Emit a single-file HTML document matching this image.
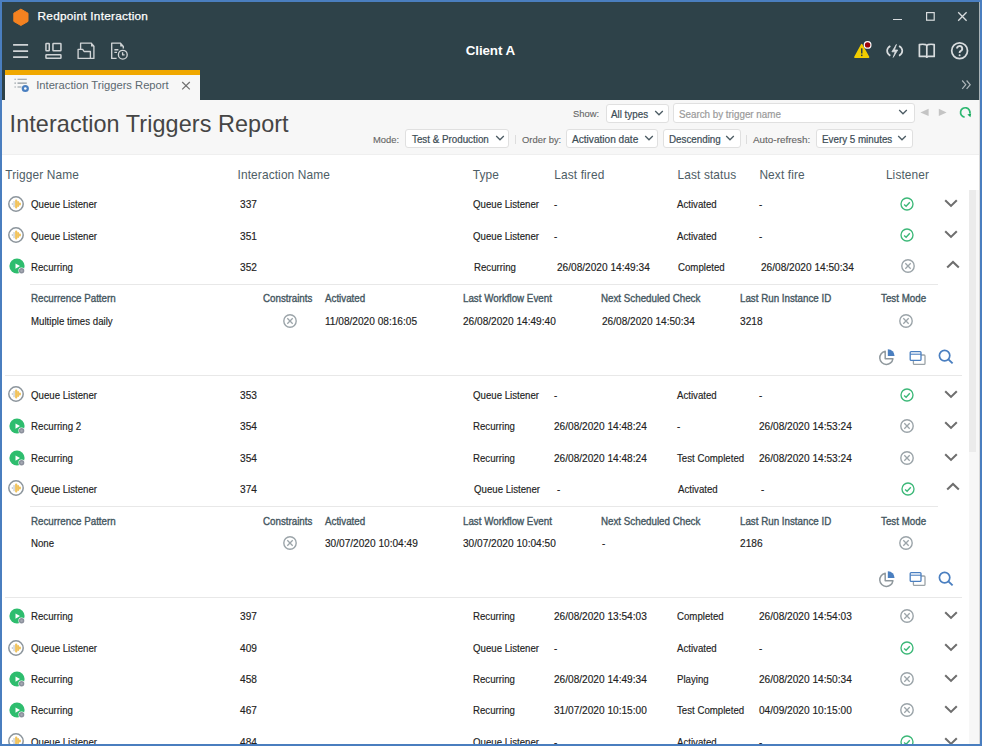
<!DOCTYPE html>
<html><head><meta charset="utf-8"><title>Interaction Triggers Report</title>
<style>
html,body{margin:0;padding:0;}
body{width:982px;height:746px;position:relative;overflow:hidden;background:#4a7ebf;font-family:'Liberation Sans', sans-serif;}
.a{position:absolute;}
.t{position:absolute;white-space:nowrap;font-family:'Liberation Sans', sans-serif;transform-origin:0 0;}
svg.a{overflow:visible;}
</style></head><body>
<div class="a" style="left:2.00px;top:2.00px;width:978.00px;height:742.00px;background:#fff"></div>
<div class="a" style="left:2.00px;top:2.00px;width:978.00px;height:98.00px;background:#2e4249"></div>
<svg class="a" style="left:0.00px;top:0.00px;" width="40" height="35" viewBox="0 0 40 35"><polygon points="20.90,9.10 28.00,13.20 28.00,21.40 20.90,25.50 13.80,21.40 13.80,13.20" fill="#f58220" stroke="#f58220" stroke-width="1" stroke-linejoin="round"/></svg>
<div class="t" style="left:37.60px;top:11px;font-size:11.8px;line-height:11.8px;color:#ffffff;letter-spacing:0.25px;-webkit-text-stroke:0.25px #ffffff;">Redpoint Interaction</div>
<div class="a" style="left:893.40px;top:19.20px;width:8.60px;height:1.30px;background:#d8dcde"></div>
<svg class="a" style="left:920.00px;top:5.00px;" width="20" height="20" viewBox="0 0 20 20"><rect x="6.6" y="7.6" width="7.6" height="7.6" fill="none" stroke="#d8dcde" stroke-width="1.2"/></svg>
<svg class="a" style="left:950.00px;top:5.00px;" width="25" height="20" viewBox="0 0 25 20"><path d="M8.2 7.3 L16.6 15.7 M16.6 7.3 L8.2 15.7" stroke="#d8dcde" stroke-width="1.3"/></svg>
<svg class="a" style="left:10.00px;top:40.00px;" width="22" height="22" viewBox="0 0 22 22"><path d="M3.1 4.9 H18.1 M3.1 11.1 H18.1 M3.1 17.1 H18.1" stroke="#d0d4d6" stroke-width="1.9"/></svg>
<svg class="a" style="left:40.00px;top:38.00px;" width="26" height="26" viewBox="0 0 26 26"><g fill="none" stroke="#d0d4d6" stroke-width="1.5"><rect x="5.95" y="5.45" width="3.3" height="7.4" rx="0.6"/><rect x="12.95" y="5.45" width="8" height="7.4" rx="0.6"/><rect x="5.95" y="16.85" width="15" height="3.5" rx="0.6"/></g></svg>
<svg class="a" style="left:74.00px;top:38.00px;" width="26" height="26" viewBox="0 0 26 26"><g fill="none" stroke="#d0d4d6" stroke-width="1.35" stroke-linejoin="round"><path d="M6.6 11.2 V5.1 H17.2 L19.9 8.2 V20.4 H16.4"/><path d="M4.1 20.4 V11.3 H8.7 L10.1 13.5 H16.4 V20.4 Z"/></g><path d="M17 4.6 L20.4 8.4 H17 Z" fill="#d0d4d6"/></svg>
<svg class="a" style="left:107.00px;top:38.00px;" width="26" height="26" viewBox="0 0 26 26"><g fill="none" stroke="#d0d4d6" stroke-width="1.35" stroke-linejoin="round"><path d="M9.6 20.4 H4.7 V5.1 H13.4 L16.3 8.4 V10.6"/><path d="M7.4 11.7 H11.4 M7.4 14.4 H10"/><circle cx="15.8" cy="16.7" r="4.4"/><path d="M15.6 14.3 V16.9 H17.6"/></g><path d="M13.2 4.6 L16.8 8.6 H13.2 Z" fill="#d0d4d6"/></svg>
<div class="t" style="left:465.70px;top:44px;font-size:13.4px;line-height:13.4px;color:#ffffff;font-weight:bold;letter-spacing:-0.1px;">Client A</div>
<svg class="a" style="left:850.00px;top:38.00px;" width="26" height="26" viewBox="0 0 26 26"><path d="M11.7 6.6 L18.6 19.2 H4.9 Z" fill="#f2cd00" stroke="#f2cd00" stroke-width="1.5" stroke-linejoin="round"/><rect x="11" y="10.3" width="1.5" height="5.2" fill="#2e4249"/><rect x="11" y="16.6" width="1.5" height="1.5" fill="#2e4249"/><circle cx="17.6" cy="6.9" r="3.9" fill="#ffffff"/><circle cx="17.6" cy="6.9" r="2.7" fill="#9c0008"/></svg>
<svg class="a" style="left:882.00px;top:38.00px;" width="26" height="26" viewBox="0 0 26 26"><g fill="none" stroke="#d8dcde" stroke-width="1.7"><path d="M8.34 7.89 A7.6 6.0 0 0 0 8.34 17.71"/><path d="M17.06 7.89 A7.6 6.0 0 0 1 17.06 17.71"/></g><path d="M14.4 6.4 L9.9 13.8 H13.2 L11.2 19.4 L15.7 12 H12.4 Z" fill="#d8dcde" stroke="#d8dcde" stroke-width="0.8" stroke-linejoin="round"/></svg>
<svg class="a" style="left:914.00px;top:38.00px;" width="26" height="26" viewBox="0 0 26 26"><g fill="none" stroke="#d8dcde" stroke-width="1.7" stroke-linejoin="round" stroke-linecap="round"><path d="M5.4 6.6 Q8.6 5.9 11.6 6.6 L12.8 7.4 L14 6.6 Q17 5.9 20.2 6.6 V18.4 H14 L12.8 19.2 L11.6 18.4 H5.4 Z"/><path d="M12.8 7.6 V18.6"/></g></svg>
<svg class="a" style="left:946.00px;top:37.00px;" width="28" height="28" viewBox="0 0 28 28"><circle cx="13.6" cy="13.8" r="7.9" fill="none" stroke="#d8dcde" stroke-width="1.75"/><path d="M11.0 11.6 A2.6 2.6 0 1 1 14.5 14.1 C13.7 14.5 13.6 15.1 13.6 16" fill="none" stroke="#d8dcde" stroke-width="1.9"/><circle cx="13.6" cy="18.2" r="1.0" fill="#d8dcde"/></svg>
<div class="a" style="left:4.70px;top:70.30px;width:195.30px;height:4.30px;background:#f0a800"></div>
<div class="a" style="left:4.70px;top:74.60px;width:195.30px;height:26.00px;background:#f7f7f7"></div>
<svg class="a" style="left:10.00px;top:74.00px;" width="24" height="22" viewBox="0 0 24 22"><g stroke="#8e989e" stroke-width="1.1"><path d="M4.5 5.2 H5.8 M7.5 5.2 H16.8 M4.5 9.1 H5.8 M7.5 9.1 H16.8 M4.5 13 H5.8 M7.5 13 H11.5"/></g><circle cx="15.3" cy="14.5" r="3.6" fill="#4a7fc0"/><circle cx="15.3" cy="14.5" r="1.3" fill="#ffffff"/></svg>
<div class="t" style="left:36.20px;top:80px;font-size:11.2px;line-height:11.2px;color:#5b6870;">Interaction Triggers Report</div>
<svg class="a" style="left:178.00px;top:78.00px;" width="16" height="16" viewBox="0 0 16 16"><path d="M4.2 4 L11.8 11.4 M11.8 4 L4.2 11.4" stroke="#707070" stroke-width="1.2"/></svg>
<svg class="a" style="left:958.00px;top:76.00px;" width="16" height="16" viewBox="0 0 16 16"><path d="M4.2 4.5 L7.8 8.7 L4.2 12.9 M8.6 4.5 L12.2 8.7 L8.6 12.9" fill="none" stroke="#aeb6ba" stroke-width="1.2"/></svg>
<div class="a" style="left:2.00px;top:100.00px;width:978.00px;height:54.00px;background:#f7f7f7"></div>
<div class="a" style="left:2.00px;top:153.50px;width:978.00px;height:1.00px;background:#efefef"></div>
<div class="t" style="left:9.60px;top:113px;font-size:23.4px;line-height:23.4px;color:#454545;letter-spacing:0.08px;">Interaction Triggers Report</div>
<div class="t" style="left:572.60px;top:109px;font-size:9.8px;line-height:9.8px;color:#666666;transform:scaleX(0.96);-webkit-text-stroke:0.12px #666;">Show:</div>
<div class="a" style="left:605.80px;top:103.50px;width:63.00px;height:19.30px;background:#fff;border:1px solid #e0e0e0;border-radius:3px;box-sizing:border-box"></div>
<div class="t" style="left:611.10px;top:110px;font-size:10.0px;line-height:10.0px;color:#3c4c55;transform:scaleX(0.98);-webkit-text-stroke:0.2px #3c4c55;">All types</div>
<svg class="a" style="left:653.40px;top:106.55px;" width="12" height="12" viewBox="0 0 12 12"><path d="M2.2 4 L6 7.8 L9.8 4" fill="none" stroke="#4d5c64" stroke-width="1.3"/></svg>
<div class="a" style="left:673.40px;top:102.60px;width:241.20px;height:20.60px;background:#fff;border:1px solid #e0e0e0;border-radius:3px;box-sizing:border-box"></div>
<div class="t" style="left:679.30px;top:110px;font-size:10.0px;line-height:10.0px;color:#9a9a9a;transform:scaleX(0.98);-webkit-text-stroke:0.2px #9a9a9a;">Search by trigger name</div>
<svg class="a" style="left:897.00px;top:106.30px;" width="12" height="12" viewBox="0 0 12 12"><path d="M2.2 4 L6 7.8 L9.8 4" fill="none" stroke="#4d5c64" stroke-width="1.3"/></svg>
<svg class="a" style="left:916.00px;top:104.00px;" width="16" height="16" viewBox="0 0 16 16"><path d="M12.6 4.8 V12.1 L4.4 8.45 Z" fill="#c4c4c4"/></svg>
<svg class="a" style="left:934.00px;top:104.00px;" width="16" height="16" viewBox="0 0 16 16"><path d="M4.8 4.8 V12.1 L12.6 8.45 Z" fill="#c4c4c4"/></svg>
<svg class="a" style="left:955.00px;top:103.00px;" width="20" height="20" viewBox="0 0 20 20"><path d="M9.6 14.1 A4.7 4.7 0 1 1 14.8 10.6" fill="none" stroke="#2eb872" stroke-width="1.7"/><path d="M12.4 11.6 L16.2 10.6 L15.4 14.2 Z" fill="#14a85a"/></svg>
<div class="t" style="left:372.90px;top:135px;font-size:9.8px;line-height:9.8px;color:#666666;transform:scaleX(0.96);-webkit-text-stroke:0.12px #666;">Mode:</div>
<div class="a" style="left:405.40px;top:129.00px;width:104.10px;height:18.80px;background:#fff;border:1px solid #e0e0e0;border-radius:3px;box-sizing:border-box"></div>
<div class="t" style="left:411.70px;top:135px;font-size:10.0px;line-height:10.0px;color:#3c4c55;transform:scaleX(0.98);-webkit-text-stroke:0.2px #3c4c55;">Test &amp; Production</div>
<svg class="a" style="left:493.90px;top:131.80px;" width="12" height="12" viewBox="0 0 12 12"><path d="M2.2 4 L6 7.8 L9.8 4" fill="none" stroke="#4d5c64" stroke-width="1.3"/></svg>
<div class="a" style="left:515.20px;top:134.50px;width:1.00px;height:9.00px;background:#dddddd"></div>
<div class="t" style="left:522.00px;top:135px;font-size:9.8px;line-height:9.8px;color:#666666;transform:scaleX(0.96);-webkit-text-stroke:0.12px #666;">Order by:</div>
<div class="a" style="left:566.20px;top:129.00px;width:92.20px;height:18.80px;background:#fff;border:1px solid #e0e0e0;border-radius:3px;box-sizing:border-box"></div>
<div class="t" style="left:572.10px;top:135px;font-size:10.0px;line-height:10.0px;color:#3c4c55;transform:scaleX(1.01);-webkit-text-stroke:0.2px #3c4c55;">Activation date</div>
<svg class="a" style="left:643.10px;top:131.80px;" width="12" height="12" viewBox="0 0 12 12"><path d="M2.2 4 L6 7.8 L9.8 4" fill="none" stroke="#4d5c64" stroke-width="1.3"/></svg>
<div class="a" style="left:662.80px;top:129.00px;width:77.80px;height:18.80px;background:#fff;border:1px solid #e0e0e0;border-radius:3px;box-sizing:border-box"></div>
<div class="t" style="left:668.70px;top:135px;font-size:10.0px;line-height:10.0px;color:#3c4c55;transform:scaleX(0.98);-webkit-text-stroke:0.2px #3c4c55;">Descending</div>
<svg class="a" style="left:724.40px;top:131.80px;" width="12" height="12" viewBox="0 0 12 12"><path d="M2.2 4 L6 7.8 L9.8 4" fill="none" stroke="#4d5c64" stroke-width="1.3"/></svg>
<div class="a" style="left:746.20px;top:134.50px;width:1.00px;height:9.00px;background:#dddddd"></div>
<div class="t" style="left:753.00px;top:135px;font-size:9.8px;line-height:9.8px;color:#666666;transform:scaleX(1.01);-webkit-text-stroke:0.12px #666;">Auto-refresh:</div>
<div class="a" style="left:815.50px;top:129.00px;width:97.20px;height:18.80px;background:#fff;border:1px solid #e0e0e0;border-radius:3px;box-sizing:border-box"></div>
<div class="t" style="left:821.90px;top:135px;font-size:10.0px;line-height:10.0px;color:#3c4c55;transform:scaleX(0.98);-webkit-text-stroke:0.2px #3c4c55;">Every 5 minutes</div>
<svg class="a" style="left:896.00px;top:131.80px;" width="12" height="12" viewBox="0 0 12 12"><path d="M2.2 4 L6 7.8 L9.8 4" fill="none" stroke="#4d5c64" stroke-width="1.3"/></svg>
<div class="t" style="left:5.30px;top:170px;font-size:11.9px;line-height:11.9px;color:#4e5d65;letter-spacing:0.12px;">Trigger Name</div>
<div class="t" style="left:237.50px;top:170px;font-size:11.9px;line-height:11.9px;color:#4e5d65;letter-spacing:0.12px;">Interaction Name</div>
<div class="t" style="left:472.80px;top:170px;font-size:11.9px;line-height:11.9px;color:#4e5d65;letter-spacing:0.12px;">Type</div>
<div class="t" style="left:554.30px;top:170px;font-size:11.9px;line-height:11.9px;color:#4e5d65;letter-spacing:0.12px;">Last fired</div>
<div class="t" style="left:677.50px;top:170px;font-size:11.9px;line-height:11.9px;color:#4e5d65;letter-spacing:0.12px;">Last status</div>
<div class="t" style="left:759.40px;top:170px;font-size:11.9px;line-height:11.9px;color:#4e5d65;letter-spacing:0.12px;">Next fire</div>
<div class="t" style="left:885.90px;top:170px;font-size:11.9px;line-height:11.9px;color:#4e5d65;letter-spacing:0.12px;">Listener</div>
<div class="a" style="left:968.50px;top:190.00px;width:10.50px;height:554.00px;background:#f7f7f7"></div>
<div class="a" style="left:969.20px;top:190.00px;width:7.00px;height:262.00px;background:#ebebeb"></div>
<svg class="a" style="left:5.90px;top:193.50px;" width="20" height="20" viewBox="0 0 20 20"><circle cx="10" cy="10" r="7.2" fill="#fff" stroke="#8c959c" stroke-width="1.5"/><g fill="#b9c1c9"><rect x="5.8" y="8.9" width="1.0" height="2.2" rx="0.5"/><rect x="7.5" y="6.9" width="1.1" height="6.3" rx="0.55"/></g><g fill="#f1c35c"><rect x="9.1" y="5.5" width="2.2" height="9.1" rx="1"/><rect x="11.1" y="6.9" width="1.9" height="6.2" rx="0.8"/><rect x="12.8" y="8.4" width="2.1" height="3.2" rx="1"/></g></svg>
<div class="t" style="left:30.60px;top:200px;font-size:10.4px;line-height:10.4px;color:#222222;transform:scaleX(0.93);-webkit-text-stroke:0.15px #222;">Queue Listener</div>
<div class="t" style="left:239.90px;top:200px;font-size:10.4px;line-height:10.4px;color:#222222;transform:scaleX(0.975);-webkit-text-stroke:0.15px #222;">337</div>
<div class="t" style="left:472.80px;top:200px;font-size:10.4px;line-height:10.4px;color:#222222;transform:scaleX(0.93);-webkit-text-stroke:0.15px #222;">Queue Listener</div>
<div class="t" style="left:553.70px;top:200px;font-size:10.4px;line-height:10.4px;color:#222222;transform:scaleX(0.93);-webkit-text-stroke:0.15px #222;">-</div>
<div class="t" style="left:676.90px;top:200px;font-size:10.4px;line-height:10.4px;color:#222222;transform:scaleX(0.93);-webkit-text-stroke:0.15px #222;">Activated</div>
<div class="t" style="left:759.00px;top:200px;font-size:10.4px;line-height:10.4px;color:#222222;transform:scaleX(0.93);-webkit-text-stroke:0.15px #222;">-</div>
<svg class="a" style="left:897.50px;top:194.90px;" width="18" height="18" viewBox="0 0 18 18"><circle cx="9" cy="9" r="6.0" fill="none" stroke="#3cb878" stroke-width="1.35"/><path d="M6.1 9.4 L8.1 11.2 L11.8 7.2" fill="none" stroke="#3cb878" stroke-width="1.4"/></svg>
<svg class="a" style="left:943.10px;top:194.90px;" width="16" height="16" viewBox="0 0 16 16"><path d="M2.2 5.2 L8 10.9 L13.8 5.2" fill="none" stroke="#6e6e6e" stroke-width="2.05"/></svg>
<svg class="a" style="left:5.90px;top:224.90px;" width="20" height="20" viewBox="0 0 20 20"><circle cx="10" cy="10" r="7.2" fill="#fff" stroke="#8c959c" stroke-width="1.5"/><g fill="#b9c1c9"><rect x="5.8" y="8.9" width="1.0" height="2.2" rx="0.5"/><rect x="7.5" y="6.9" width="1.1" height="6.3" rx="0.55"/></g><g fill="#f1c35c"><rect x="9.1" y="5.5" width="2.2" height="9.1" rx="1"/><rect x="11.1" y="6.9" width="1.9" height="6.2" rx="0.8"/><rect x="12.8" y="8.4" width="2.1" height="3.2" rx="1"/></g></svg>
<div class="t" style="left:30.60px;top:232px;font-size:10.4px;line-height:10.4px;color:#222222;transform:scaleX(0.93);-webkit-text-stroke:0.15px #222;">Queue Listener</div>
<div class="t" style="left:239.90px;top:232px;font-size:10.4px;line-height:10.4px;color:#222222;transform:scaleX(0.975);-webkit-text-stroke:0.15px #222;">351</div>
<div class="t" style="left:472.80px;top:232px;font-size:10.4px;line-height:10.4px;color:#222222;transform:scaleX(0.93);-webkit-text-stroke:0.15px #222;">Queue Listener</div>
<div class="t" style="left:553.70px;top:232px;font-size:10.4px;line-height:10.4px;color:#222222;transform:scaleX(0.93);-webkit-text-stroke:0.15px #222;">-</div>
<div class="t" style="left:676.90px;top:232px;font-size:10.4px;line-height:10.4px;color:#222222;transform:scaleX(0.93);-webkit-text-stroke:0.15px #222;">Activated</div>
<div class="t" style="left:759.00px;top:232px;font-size:10.4px;line-height:10.4px;color:#222222;transform:scaleX(0.93);-webkit-text-stroke:0.15px #222;">-</div>
<svg class="a" style="left:897.50px;top:226.30px;" width="18" height="18" viewBox="0 0 18 18"><circle cx="9" cy="9" r="6.0" fill="none" stroke="#3cb878" stroke-width="1.35"/><path d="M6.1 9.4 L8.1 11.2 L11.8 7.2" fill="none" stroke="#3cb878" stroke-width="1.4"/></svg>
<svg class="a" style="left:943.10px;top:226.30px;" width="16" height="16" viewBox="0 0 16 16"><path d="M2.2 5.2 L8 10.9 L13.8 5.2" fill="none" stroke="#6e6e6e" stroke-width="2.05"/></svg>
<svg class="a" style="left:6.50px;top:256.30px;" width="20" height="20" viewBox="0 0 20 20"><circle cx="10" cy="10" r="7.6" fill="#2ebd6e"/><path d="M8.5 7.5 V12.7 L13.0 10.1 Z" fill="#fff"/><circle cx="14.6" cy="14.8" r="3.2" fill="#fff"/><circle cx="14.6" cy="14.8" r="2.7" fill="#8b909c"/><circle cx="14.6" cy="14.8" r="1.2" fill="#a6aab4"/></svg>
<div class="t" style="left:30.60px;top:263px;font-size:10.4px;line-height:10.4px;color:#222222;transform:scaleX(0.93);-webkit-text-stroke:0.15px #222;">Recurring</div>
<div class="t" style="left:239.90px;top:263px;font-size:10.4px;line-height:10.4px;color:#222222;transform:scaleX(0.975);-webkit-text-stroke:0.15px #222;">352</div>
<div class="t" style="left:474.30px;top:263px;font-size:10.4px;line-height:10.4px;color:#222222;transform:scaleX(0.93);-webkit-text-stroke:0.15px #222;">Recurring</div>
<div class="t" style="left:556.70px;top:263px;font-size:10.4px;line-height:10.4px;color:#222222;transform:scaleX(0.973);-webkit-text-stroke:0.15px #222;">26/08/2020 14:49:34</div>
<div class="t" style="left:678.40px;top:263px;font-size:10.4px;line-height:10.4px;color:#222222;transform:scaleX(0.93);-webkit-text-stroke:0.15px #222;">Completed</div>
<div class="t" style="left:760.50px;top:263px;font-size:10.4px;line-height:10.4px;color:#222222;transform:scaleX(0.973);-webkit-text-stroke:0.15px #222;">26/08/2020 14:50:34</div>
<svg class="a" style="left:899.00px;top:257.40px;" width="18" height="18" viewBox="0 0 18 18"><circle cx="9" cy="9" r="6.2" fill="none" stroke="#9ba4a9" stroke-width="1.4"/><path d="M6.3 6.3 L11.7 11.7 M11.7 6.3 L6.3 11.7" stroke="#9ba4a9" stroke-width="1.3"/></svg>
<svg class="a" style="left:944.60px;top:257.00px;" width="16" height="16" viewBox="0 0 16 16"><path d="M2.2 10.6 L8 4.9 L13.8 10.6" fill="none" stroke="#6e6e6e" stroke-width="2.05"/></svg>
<div class="a" style="left:30.00px;top:284.30px;width:908.00px;height:1.00px;background:#e8e8e8"></div>
<div class="t" style="left:30.60px;top:294px;font-size:10.4px;line-height:10.4px;color:#45575f;transform:scaleX(0.94);-webkit-text-stroke:0.35px #45575f;">Recurrence Pattern</div>
<div class="t" style="left:263.40px;top:294px;font-size:10.4px;line-height:10.4px;color:#45575f;transform:scaleX(0.94);-webkit-text-stroke:0.35px #45575f;">Constraints</div>
<div class="t" style="left:324.60px;top:294px;font-size:10.4px;line-height:10.4px;color:#45575f;transform:scaleX(0.94);-webkit-text-stroke:0.35px #45575f;">Activated</div>
<div class="t" style="left:462.80px;top:294px;font-size:10.4px;line-height:10.4px;color:#45575f;transform:scaleX(0.94);-webkit-text-stroke:0.35px #45575f;">Last Workflow Event</div>
<div class="t" style="left:601.40px;top:294px;font-size:10.4px;line-height:10.4px;color:#45575f;transform:scaleX(0.94);-webkit-text-stroke:0.35px #45575f;">Next Scheduled Check</div>
<div class="t" style="left:739.90px;top:294px;font-size:10.4px;line-height:10.4px;color:#45575f;transform:scaleX(0.94);-webkit-text-stroke:0.35px #45575f;">Last Run Instance ID</div>
<div class="t" style="left:881.00px;top:294px;font-size:10.4px;line-height:10.4px;color:#45575f;transform:scaleX(0.94);-webkit-text-stroke:0.35px #45575f;">Test Mode</div>
<div class="t" style="left:30.60px;top:317px;font-size:10.4px;line-height:10.4px;color:#222222;transform:scaleX(0.93);-webkit-text-stroke:0.15px #222;">Multiple times daily</div>
<svg class="a" style="left:281.20px;top:312.20px;" width="18" height="18" viewBox="0 0 18 18"><circle cx="9" cy="9" r="6.2" fill="none" stroke="#9ba4a9" stroke-width="1.4"/><path d="M6.3 6.3 L11.7 11.7 M11.7 6.3 L6.3 11.7" stroke="#9ba4a9" stroke-width="1.3"/></svg>
<div class="t" style="left:325.40px;top:317px;font-size:10.4px;line-height:10.4px;color:#222222;transform:scaleX(0.973);-webkit-text-stroke:0.15px #222;">11/08/2020 08:16:05</div>
<div class="t" style="left:463.40px;top:317px;font-size:10.4px;line-height:10.4px;color:#222222;transform:scaleX(0.973);-webkit-text-stroke:0.15px #222;">26/08/2020 14:49:40</div>
<div class="t" style="left:602.20px;top:317px;font-size:10.4px;line-height:10.4px;color:#222222;transform:scaleX(0.973);-webkit-text-stroke:0.15px #222;">26/08/2020 14:50:34</div>
<div class="t" style="left:740.30px;top:317px;font-size:10.4px;line-height:10.4px;color:#222222;transform:scaleX(0.975);-webkit-text-stroke:0.15px #222;">3218</div>
<svg class="a" style="left:896.60px;top:312.20px;" width="18" height="18" viewBox="0 0 18 18"><circle cx="9" cy="9" r="6.2" fill="none" stroke="#9ba4a9" stroke-width="1.4"/><path d="M6.3 6.3 L11.7 11.7 M11.7 6.3 L6.3 11.7" stroke="#9ba4a9" stroke-width="1.3"/></svg>
<svg class="a" style="left:876.00px;top:347.30px;" width="22" height="22" viewBox="0 0 22 22"><path d="M9.2 4.3 A6.6 6.6 0 1 0 16.9 11.8 H9.2 Z" fill="none" stroke="#8f989d" stroke-width="1.5" stroke-linejoin="round"/><path d="M11.8 2.2 A6.6 6.6 0 0 1 18.6 9 H11.8 Z" fill="#4a7fc0"/></svg>
<svg class="a" style="left:906.00px;top:346.80px;" width="22" height="22" viewBox="0 0 22 22"><rect x="7.4" y="8" width="11.6" height="9.4" rx="1" fill="#fff" stroke="#9aa2a7" stroke-width="1.3"/><rect x="4.2" y="4.6" width="10.8" height="8.8" rx="1" fill="#fff" stroke="#4a7fc0" stroke-width="1.3"/><path d="M4.2 7.2 H15" stroke="#4a7fc0" stroke-width="1.1"/></svg>
<svg class="a" style="left:934.00px;top:346.30px;" width="22" height="22" viewBox="0 0 22 22"><circle cx="10.6" cy="9.6" r="5.2" fill="none" stroke="#4a7fc0" stroke-width="1.7"/><path d="M14.4 13.4 L18.6 17.4" stroke="#4a7fc0" stroke-width="1.9"/></svg>
<div class="a" style="left:5.00px;top:375.40px;width:957.00px;height:1.00px;background:#e8e8e8"></div>
<svg class="a" style="left:5.90px;top:384.15px;" width="20" height="20" viewBox="0 0 20 20"><circle cx="10" cy="10" r="7.2" fill="#fff" stroke="#8c959c" stroke-width="1.5"/><g fill="#b9c1c9"><rect x="5.8" y="8.9" width="1.0" height="2.2" rx="0.5"/><rect x="7.5" y="6.9" width="1.1" height="6.3" rx="0.55"/></g><g fill="#f1c35c"><rect x="9.1" y="5.5" width="2.2" height="9.1" rx="1"/><rect x="11.1" y="6.9" width="1.9" height="6.2" rx="0.8"/><rect x="12.8" y="8.4" width="2.1" height="3.2" rx="1"/></g></svg>
<div class="t" style="left:30.60px;top:391px;font-size:10.4px;line-height:10.4px;color:#222222;transform:scaleX(0.93);-webkit-text-stroke:0.15px #222;">Queue Listener</div>
<div class="t" style="left:239.90px;top:391px;font-size:10.4px;line-height:10.4px;color:#222222;transform:scaleX(0.975);-webkit-text-stroke:0.15px #222;">353</div>
<div class="t" style="left:472.80px;top:391px;font-size:10.4px;line-height:10.4px;color:#222222;transform:scaleX(0.93);-webkit-text-stroke:0.15px #222;">Queue Listener</div>
<div class="t" style="left:553.70px;top:391px;font-size:10.4px;line-height:10.4px;color:#222222;transform:scaleX(0.93);-webkit-text-stroke:0.15px #222;">-</div>
<div class="t" style="left:676.90px;top:391px;font-size:10.4px;line-height:10.4px;color:#222222;transform:scaleX(0.93);-webkit-text-stroke:0.15px #222;">Activated</div>
<div class="t" style="left:759.00px;top:391px;font-size:10.4px;line-height:10.4px;color:#222222;transform:scaleX(0.93);-webkit-text-stroke:0.15px #222;">-</div>
<svg class="a" style="left:897.50px;top:385.55px;" width="18" height="18" viewBox="0 0 18 18"><circle cx="9" cy="9" r="6.0" fill="none" stroke="#3cb878" stroke-width="1.35"/><path d="M6.1 9.4 L8.1 11.2 L11.8 7.2" fill="none" stroke="#3cb878" stroke-width="1.4"/></svg>
<svg class="a" style="left:943.10px;top:385.55px;" width="16" height="16" viewBox="0 0 16 16"><path d="M2.2 5.2 L8 10.9 L13.8 5.2" fill="none" stroke="#6e6e6e" stroke-width="2.05"/></svg>
<svg class="a" style="left:6.50px;top:416.00px;" width="20" height="20" viewBox="0 0 20 20"><circle cx="10" cy="10" r="7.6" fill="#2ebd6e"/><path d="M8.5 7.5 V12.7 L13.0 10.1 Z" fill="#fff"/><circle cx="14.6" cy="14.8" r="3.2" fill="#fff"/><circle cx="14.6" cy="14.8" r="2.7" fill="#8b909c"/><circle cx="14.6" cy="14.8" r="1.2" fill="#a6aab4"/></svg>
<div class="t" style="left:30.60px;top:422px;font-size:10.4px;line-height:10.4px;color:#222222;transform:scaleX(0.934);-webkit-text-stroke:0.15px #222;">Recurring 2</div>
<div class="t" style="left:239.90px;top:422px;font-size:10.4px;line-height:10.4px;color:#222222;transform:scaleX(0.975);-webkit-text-stroke:0.15px #222;">354</div>
<div class="t" style="left:472.80px;top:422px;font-size:10.4px;line-height:10.4px;color:#222222;transform:scaleX(0.93);-webkit-text-stroke:0.15px #222;">Recurring</div>
<div class="t" style="left:553.70px;top:422px;font-size:10.4px;line-height:10.4px;color:#222222;transform:scaleX(0.973);-webkit-text-stroke:0.15px #222;">26/08/2020 14:48:24</div>
<div class="t" style="left:676.90px;top:422px;font-size:10.4px;line-height:10.4px;color:#222222;transform:scaleX(0.93);-webkit-text-stroke:0.15px #222;">-</div>
<div class="t" style="left:759.00px;top:422px;font-size:10.4px;line-height:10.4px;color:#222222;transform:scaleX(0.973);-webkit-text-stroke:0.15px #222;">26/08/2020 14:53:24</div>
<svg class="a" style="left:897.50px;top:417.10px;" width="18" height="18" viewBox="0 0 18 18"><circle cx="9" cy="9" r="6.2" fill="none" stroke="#9ba4a9" stroke-width="1.4"/><path d="M6.3 6.3 L11.7 11.7 M11.7 6.3 L6.3 11.7" stroke="#9ba4a9" stroke-width="1.3"/></svg>
<svg class="a" style="left:943.10px;top:417.10px;" width="16" height="16" viewBox="0 0 16 16"><path d="M2.2 5.2 L8 10.9 L13.8 5.2" fill="none" stroke="#6e6e6e" stroke-width="2.05"/></svg>
<svg class="a" style="left:6.50px;top:447.60px;" width="20" height="20" viewBox="0 0 20 20"><circle cx="10" cy="10" r="7.6" fill="#2ebd6e"/><path d="M8.5 7.5 V12.7 L13.0 10.1 Z" fill="#fff"/><circle cx="14.6" cy="14.8" r="3.2" fill="#fff"/><circle cx="14.6" cy="14.8" r="2.7" fill="#8b909c"/><circle cx="14.6" cy="14.8" r="1.2" fill="#a6aab4"/></svg>
<div class="t" style="left:30.60px;top:454px;font-size:10.4px;line-height:10.4px;color:#222222;transform:scaleX(0.93);-webkit-text-stroke:0.15px #222;">Recurring</div>
<div class="t" style="left:239.90px;top:454px;font-size:10.4px;line-height:10.4px;color:#222222;transform:scaleX(0.975);-webkit-text-stroke:0.15px #222;">354</div>
<div class="t" style="left:472.80px;top:454px;font-size:10.4px;line-height:10.4px;color:#222222;transform:scaleX(0.93);-webkit-text-stroke:0.15px #222;">Recurring</div>
<div class="t" style="left:553.70px;top:454px;font-size:10.4px;line-height:10.4px;color:#222222;transform:scaleX(0.973);-webkit-text-stroke:0.15px #222;">26/08/2020 14:48:24</div>
<div class="t" style="left:676.90px;top:454px;font-size:10.4px;line-height:10.4px;color:#222222;transform:scaleX(0.93);-webkit-text-stroke:0.15px #222;">Test Completed</div>
<div class="t" style="left:759.00px;top:454px;font-size:10.4px;line-height:10.4px;color:#222222;transform:scaleX(0.973);-webkit-text-stroke:0.15px #222;">26/08/2020 14:53:24</div>
<svg class="a" style="left:897.50px;top:448.70px;" width="18" height="18" viewBox="0 0 18 18"><circle cx="9" cy="9" r="6.2" fill="none" stroke="#9ba4a9" stroke-width="1.4"/><path d="M6.3 6.3 L11.7 11.7 M11.7 6.3 L6.3 11.7" stroke="#9ba4a9" stroke-width="1.3"/></svg>
<svg class="a" style="left:943.10px;top:448.70px;" width="16" height="16" viewBox="0 0 16 16"><path d="M2.2 5.2 L8 10.9 L13.8 5.2" fill="none" stroke="#6e6e6e" stroke-width="2.05"/></svg>
<svg class="a" style="left:5.90px;top:478.40px;" width="20" height="20" viewBox="0 0 20 20"><circle cx="10" cy="10" r="7.2" fill="#fff" stroke="#8c959c" stroke-width="1.5"/><g fill="#b9c1c9"><rect x="5.8" y="8.9" width="1.0" height="2.2" rx="0.5"/><rect x="7.5" y="6.9" width="1.1" height="6.3" rx="0.55"/></g><g fill="#f1c35c"><rect x="9.1" y="5.5" width="2.2" height="9.1" rx="1"/><rect x="11.1" y="6.9" width="1.9" height="6.2" rx="0.8"/><rect x="12.8" y="8.4" width="2.1" height="3.2" rx="1"/></g></svg>
<div class="t" style="left:30.60px;top:485px;font-size:10.4px;line-height:10.4px;color:#222222;transform:scaleX(0.93);-webkit-text-stroke:0.15px #222;">Queue Listener</div>
<div class="t" style="left:239.90px;top:485px;font-size:10.4px;line-height:10.4px;color:#222222;transform:scaleX(0.975);-webkit-text-stroke:0.15px #222;">374</div>
<div class="t" style="left:474.30px;top:485px;font-size:10.4px;line-height:10.4px;color:#222222;transform:scaleX(0.93);-webkit-text-stroke:0.15px #222;">Queue Listener</div>
<div class="t" style="left:556.70px;top:485px;font-size:10.4px;line-height:10.4px;color:#222222;transform:scaleX(0.93);-webkit-text-stroke:0.15px #222;">-</div>
<div class="t" style="left:678.40px;top:485px;font-size:10.4px;line-height:10.4px;color:#222222;transform:scaleX(0.93);-webkit-text-stroke:0.15px #222;">Activated</div>
<div class="t" style="left:760.50px;top:485px;font-size:10.4px;line-height:10.4px;color:#222222;transform:scaleX(0.93);-webkit-text-stroke:0.15px #222;">-</div>
<svg class="a" style="left:899.00px;top:479.80px;" width="18" height="18" viewBox="0 0 18 18"><circle cx="9" cy="9" r="6.0" fill="none" stroke="#3cb878" stroke-width="1.35"/><path d="M6.1 9.4 L8.1 11.2 L11.8 7.2" fill="none" stroke="#3cb878" stroke-width="1.4"/></svg>
<svg class="a" style="left:944.60px;top:479.40px;" width="16" height="16" viewBox="0 0 16 16"><path d="M2.2 10.6 L8 4.9 L13.8 10.6" fill="none" stroke="#6e6e6e" stroke-width="2.05"/></svg>
<div class="a" style="left:30.00px;top:505.90px;width:908.00px;height:1.00px;background:#e8e8e8"></div>
<div class="t" style="left:30.60px;top:517px;font-size:10.4px;line-height:10.4px;color:#45575f;transform:scaleX(0.94);-webkit-text-stroke:0.35px #45575f;">Recurrence Pattern</div>
<div class="t" style="left:263.40px;top:517px;font-size:10.4px;line-height:10.4px;color:#45575f;transform:scaleX(0.94);-webkit-text-stroke:0.35px #45575f;">Constraints</div>
<div class="t" style="left:324.60px;top:517px;font-size:10.4px;line-height:10.4px;color:#45575f;transform:scaleX(0.94);-webkit-text-stroke:0.35px #45575f;">Activated</div>
<div class="t" style="left:462.80px;top:517px;font-size:10.4px;line-height:10.4px;color:#45575f;transform:scaleX(0.94);-webkit-text-stroke:0.35px #45575f;">Last Workflow Event</div>
<div class="t" style="left:601.40px;top:517px;font-size:10.4px;line-height:10.4px;color:#45575f;transform:scaleX(0.94);-webkit-text-stroke:0.35px #45575f;">Next Scheduled Check</div>
<div class="t" style="left:739.90px;top:517px;font-size:10.4px;line-height:10.4px;color:#45575f;transform:scaleX(0.94);-webkit-text-stroke:0.35px #45575f;">Last Run Instance ID</div>
<div class="t" style="left:881.00px;top:517px;font-size:10.4px;line-height:10.4px;color:#45575f;transform:scaleX(0.94);-webkit-text-stroke:0.35px #45575f;">Test Mode</div>
<div class="t" style="left:30.60px;top:539px;font-size:10.4px;line-height:10.4px;color:#222222;transform:scaleX(0.93);-webkit-text-stroke:0.15px #222;">None</div>
<svg class="a" style="left:281.20px;top:534.05px;" width="18" height="18" viewBox="0 0 18 18"><circle cx="9" cy="9" r="6.2" fill="none" stroke="#9ba4a9" stroke-width="1.4"/><path d="M6.3 6.3 L11.7 11.7 M11.7 6.3 L6.3 11.7" stroke="#9ba4a9" stroke-width="1.3"/></svg>
<div class="t" style="left:325.40px;top:539px;font-size:10.4px;line-height:10.4px;color:#222222;transform:scaleX(0.973);-webkit-text-stroke:0.15px #222;">30/07/2020 10:04:49</div>
<div class="t" style="left:463.40px;top:539px;font-size:10.4px;line-height:10.4px;color:#222222;transform:scaleX(0.973);-webkit-text-stroke:0.15px #222;">30/07/2020 10:04:50</div>
<div class="t" style="left:602.20px;top:539px;font-size:10.4px;line-height:10.4px;color:#222222;transform:scaleX(0.93);-webkit-text-stroke:0.15px #222;">-</div>
<div class="t" style="left:740.30px;top:539px;font-size:10.4px;line-height:10.4px;color:#222222;transform:scaleX(0.975);-webkit-text-stroke:0.15px #222;">2186</div>
<svg class="a" style="left:896.60px;top:534.05px;" width="18" height="18" viewBox="0 0 18 18"><circle cx="9" cy="9" r="6.2" fill="none" stroke="#9ba4a9" stroke-width="1.4"/><path d="M6.3 6.3 L11.7 11.7 M11.7 6.3 L6.3 11.7" stroke="#9ba4a9" stroke-width="1.3"/></svg>
<svg class="a" style="left:876.00px;top:568.90px;" width="22" height="22" viewBox="0 0 22 22"><path d="M9.2 4.3 A6.6 6.6 0 1 0 16.9 11.8 H9.2 Z" fill="none" stroke="#8f989d" stroke-width="1.5" stroke-linejoin="round"/><path d="M11.8 2.2 A6.6 6.6 0 0 1 18.6 9 H11.8 Z" fill="#4a7fc0"/></svg>
<svg class="a" style="left:906.00px;top:568.40px;" width="22" height="22" viewBox="0 0 22 22"><rect x="7.4" y="8" width="11.6" height="9.4" rx="1" fill="#fff" stroke="#9aa2a7" stroke-width="1.3"/><rect x="4.2" y="4.6" width="10.8" height="8.8" rx="1" fill="#fff" stroke="#4a7fc0" stroke-width="1.3"/><path d="M4.2 7.2 H15" stroke="#4a7fc0" stroke-width="1.1"/></svg>
<svg class="a" style="left:934.00px;top:567.90px;" width="22" height="22" viewBox="0 0 22 22"><circle cx="10.6" cy="9.6" r="5.2" fill="none" stroke="#4a7fc0" stroke-width="1.7"/><path d="M14.4 13.4 L18.6 17.4" stroke="#4a7fc0" stroke-width="1.9"/></svg>
<div class="a" style="left:5.00px;top:597.00px;width:957.00px;height:1.00px;background:#e8e8e8"></div>
<svg class="a" style="left:6.50px;top:606.00px;" width="20" height="20" viewBox="0 0 20 20"><circle cx="10" cy="10" r="7.6" fill="#2ebd6e"/><path d="M8.5 7.5 V12.7 L13.0 10.1 Z" fill="#fff"/><circle cx="14.6" cy="14.8" r="3.2" fill="#fff"/><circle cx="14.6" cy="14.8" r="2.7" fill="#8b909c"/><circle cx="14.6" cy="14.8" r="1.2" fill="#a6aab4"/></svg>
<div class="t" style="left:30.60px;top:612px;font-size:10.4px;line-height:10.4px;color:#222222;transform:scaleX(0.93);-webkit-text-stroke:0.15px #222;">Recurring</div>
<div class="t" style="left:239.90px;top:612px;font-size:10.4px;line-height:10.4px;color:#222222;transform:scaleX(0.975);-webkit-text-stroke:0.15px #222;">397</div>
<div class="t" style="left:472.80px;top:612px;font-size:10.4px;line-height:10.4px;color:#222222;transform:scaleX(0.93);-webkit-text-stroke:0.15px #222;">Recurring</div>
<div class="t" style="left:553.70px;top:612px;font-size:10.4px;line-height:10.4px;color:#222222;transform:scaleX(0.973);-webkit-text-stroke:0.15px #222;">26/08/2020 13:54:03</div>
<div class="t" style="left:676.90px;top:612px;font-size:10.4px;line-height:10.4px;color:#222222;transform:scaleX(0.93);-webkit-text-stroke:0.15px #222;">Completed</div>
<div class="t" style="left:759.00px;top:612px;font-size:10.4px;line-height:10.4px;color:#222222;transform:scaleX(0.973);-webkit-text-stroke:0.15px #222;">26/08/2020 14:54:03</div>
<svg class="a" style="left:897.50px;top:607.10px;" width="18" height="18" viewBox="0 0 18 18"><circle cx="9" cy="9" r="6.2" fill="none" stroke="#9ba4a9" stroke-width="1.4"/><path d="M6.3 6.3 L11.7 11.7 M11.7 6.3 L6.3 11.7" stroke="#9ba4a9" stroke-width="1.3"/></svg>
<svg class="a" style="left:943.10px;top:607.10px;" width="16" height="16" viewBox="0 0 16 16"><path d="M2.2 5.2 L8 10.9 L13.8 5.2" fill="none" stroke="#6e6e6e" stroke-width="2.05"/></svg>
<svg class="a" style="left:5.90px;top:637.50px;" width="20" height="20" viewBox="0 0 20 20"><circle cx="10" cy="10" r="7.2" fill="#fff" stroke="#8c959c" stroke-width="1.5"/><g fill="#b9c1c9"><rect x="5.8" y="8.9" width="1.0" height="2.2" rx="0.5"/><rect x="7.5" y="6.9" width="1.1" height="6.3" rx="0.55"/></g><g fill="#f1c35c"><rect x="9.1" y="5.5" width="2.2" height="9.1" rx="1"/><rect x="11.1" y="6.9" width="1.9" height="6.2" rx="0.8"/><rect x="12.8" y="8.4" width="2.1" height="3.2" rx="1"/></g></svg>
<div class="t" style="left:30.60px;top:644px;font-size:10.4px;line-height:10.4px;color:#222222;transform:scaleX(0.93);-webkit-text-stroke:0.15px #222;">Queue Listener</div>
<div class="t" style="left:239.90px;top:644px;font-size:10.4px;line-height:10.4px;color:#222222;transform:scaleX(0.975);-webkit-text-stroke:0.15px #222;">409</div>
<div class="t" style="left:472.80px;top:644px;font-size:10.4px;line-height:10.4px;color:#222222;transform:scaleX(0.93);-webkit-text-stroke:0.15px #222;">Queue Listener</div>
<div class="t" style="left:553.70px;top:644px;font-size:10.4px;line-height:10.4px;color:#222222;transform:scaleX(0.93);-webkit-text-stroke:0.15px #222;">-</div>
<div class="t" style="left:676.90px;top:644px;font-size:10.4px;line-height:10.4px;color:#222222;transform:scaleX(0.93);-webkit-text-stroke:0.15px #222;">Activated</div>
<div class="t" style="left:759.00px;top:644px;font-size:10.4px;line-height:10.4px;color:#222222;transform:scaleX(0.93);-webkit-text-stroke:0.15px #222;">-</div>
<svg class="a" style="left:897.50px;top:638.90px;" width="18" height="18" viewBox="0 0 18 18"><circle cx="9" cy="9" r="6.0" fill="none" stroke="#3cb878" stroke-width="1.35"/><path d="M6.1 9.4 L8.1 11.2 L11.8 7.2" fill="none" stroke="#3cb878" stroke-width="1.4"/></svg>
<svg class="a" style="left:943.10px;top:638.90px;" width="16" height="16" viewBox="0 0 16 16"><path d="M2.2 5.2 L8 10.9 L13.8 5.2" fill="none" stroke="#6e6e6e" stroke-width="2.05"/></svg>
<svg class="a" style="left:6.50px;top:668.80px;" width="20" height="20" viewBox="0 0 20 20"><circle cx="10" cy="10" r="7.6" fill="#2ebd6e"/><path d="M8.5 7.5 V12.7 L13.0 10.1 Z" fill="#fff"/><circle cx="14.6" cy="14.8" r="3.2" fill="#fff"/><circle cx="14.6" cy="14.8" r="2.7" fill="#8b909c"/><circle cx="14.6" cy="14.8" r="1.2" fill="#a6aab4"/></svg>
<div class="t" style="left:30.60px;top:675px;font-size:10.4px;line-height:10.4px;color:#222222;transform:scaleX(0.93);-webkit-text-stroke:0.15px #222;">Recurring</div>
<div class="t" style="left:239.90px;top:675px;font-size:10.4px;line-height:10.4px;color:#222222;transform:scaleX(0.975);-webkit-text-stroke:0.15px #222;">458</div>
<div class="t" style="left:472.80px;top:675px;font-size:10.4px;line-height:10.4px;color:#222222;transform:scaleX(0.93);-webkit-text-stroke:0.15px #222;">Recurring</div>
<div class="t" style="left:553.70px;top:675px;font-size:10.4px;line-height:10.4px;color:#222222;transform:scaleX(0.973);-webkit-text-stroke:0.15px #222;">26/08/2020 14:49:34</div>
<div class="t" style="left:676.90px;top:675px;font-size:10.4px;line-height:10.4px;color:#222222;transform:scaleX(0.93);-webkit-text-stroke:0.15px #222;">Playing</div>
<div class="t" style="left:759.00px;top:675px;font-size:10.4px;line-height:10.4px;color:#222222;transform:scaleX(0.973);-webkit-text-stroke:0.15px #222;">26/08/2020 14:50:34</div>
<svg class="a" style="left:897.50px;top:669.90px;" width="18" height="18" viewBox="0 0 18 18"><circle cx="9" cy="9" r="6.2" fill="none" stroke="#9ba4a9" stroke-width="1.4"/><path d="M6.3 6.3 L11.7 11.7 M11.7 6.3 L6.3 11.7" stroke="#9ba4a9" stroke-width="1.3"/></svg>
<svg class="a" style="left:943.10px;top:669.90px;" width="16" height="16" viewBox="0 0 16 16"><path d="M2.2 5.2 L8 10.9 L13.8 5.2" fill="none" stroke="#6e6e6e" stroke-width="2.05"/></svg>
<svg class="a" style="left:6.50px;top:700.20px;" width="20" height="20" viewBox="0 0 20 20"><circle cx="10" cy="10" r="7.6" fill="#2ebd6e"/><path d="M8.5 7.5 V12.7 L13.0 10.1 Z" fill="#fff"/><circle cx="14.6" cy="14.8" r="3.2" fill="#fff"/><circle cx="14.6" cy="14.8" r="2.7" fill="#8b909c"/><circle cx="14.6" cy="14.8" r="1.2" fill="#a6aab4"/></svg>
<div class="t" style="left:30.60px;top:706px;font-size:10.4px;line-height:10.4px;color:#222222;transform:scaleX(0.93);-webkit-text-stroke:0.15px #222;">Recurring</div>
<div class="t" style="left:239.90px;top:706px;font-size:10.4px;line-height:10.4px;color:#222222;transform:scaleX(0.975);-webkit-text-stroke:0.15px #222;">467</div>
<div class="t" style="left:472.80px;top:706px;font-size:10.4px;line-height:10.4px;color:#222222;transform:scaleX(0.93);-webkit-text-stroke:0.15px #222;">Recurring</div>
<div class="t" style="left:553.70px;top:706px;font-size:10.4px;line-height:10.4px;color:#222222;transform:scaleX(0.973);-webkit-text-stroke:0.15px #222;">31/07/2020 10:15:00</div>
<div class="t" style="left:676.90px;top:706px;font-size:10.4px;line-height:10.4px;color:#222222;transform:scaleX(0.93);-webkit-text-stroke:0.15px #222;">Test Completed</div>
<div class="t" style="left:759.00px;top:706px;font-size:10.4px;line-height:10.4px;color:#222222;transform:scaleX(0.973);-webkit-text-stroke:0.15px #222;">04/09/2020 10:15:00</div>
<svg class="a" style="left:897.50px;top:701.30px;" width="18" height="18" viewBox="0 0 18 18"><circle cx="9" cy="9" r="6.2" fill="none" stroke="#9ba4a9" stroke-width="1.4"/><path d="M6.3 6.3 L11.7 11.7 M11.7 6.3 L6.3 11.7" stroke="#9ba4a9" stroke-width="1.3"/></svg>
<svg class="a" style="left:943.10px;top:701.30px;" width="16" height="16" viewBox="0 0 16 16"><path d="M2.2 5.2 L8 10.9 L13.8 5.2" fill="none" stroke="#6e6e6e" stroke-width="2.05"/></svg>
<svg class="a" style="left:5.90px;top:731.30px;" width="20" height="20" viewBox="0 0 20 20"><circle cx="10" cy="10" r="7.2" fill="#fff" stroke="#8c959c" stroke-width="1.5"/><g fill="#b9c1c9"><rect x="5.8" y="8.9" width="1.0" height="2.2" rx="0.5"/><rect x="7.5" y="6.9" width="1.1" height="6.3" rx="0.55"/></g><g fill="#f1c35c"><rect x="9.1" y="5.5" width="2.2" height="9.1" rx="1"/><rect x="11.1" y="6.9" width="1.9" height="6.2" rx="0.8"/><rect x="12.8" y="8.4" width="2.1" height="3.2" rx="1"/></g></svg>
<div class="t" style="left:30.60px;top:738px;font-size:10.4px;line-height:10.4px;color:#222222;transform:scaleX(0.93);-webkit-text-stroke:0.15px #222;">Queue Listener</div>
<div class="t" style="left:239.90px;top:738px;font-size:10.4px;line-height:10.4px;color:#222222;transform:scaleX(0.975);-webkit-text-stroke:0.15px #222;">484</div>
<div class="t" style="left:472.80px;top:738px;font-size:10.4px;line-height:10.4px;color:#222222;transform:scaleX(0.93);-webkit-text-stroke:0.15px #222;">Queue Listener</div>
<div class="t" style="left:553.70px;top:738px;font-size:10.4px;line-height:10.4px;color:#222222;transform:scaleX(0.93);-webkit-text-stroke:0.15px #222;">-</div>
<div class="t" style="left:676.90px;top:738px;font-size:10.4px;line-height:10.4px;color:#222222;transform:scaleX(0.93);-webkit-text-stroke:0.15px #222;">Activated</div>
<div class="t" style="left:759.00px;top:738px;font-size:10.4px;line-height:10.4px;color:#222222;transform:scaleX(0.93);-webkit-text-stroke:0.15px #222;">-</div>
<svg class="a" style="left:897.50px;top:732.70px;" width="18" height="18" viewBox="0 0 18 18"><circle cx="9" cy="9" r="6.0" fill="none" stroke="#3cb878" stroke-width="1.35"/><path d="M6.1 9.4 L8.1 11.2 L11.8 7.2" fill="none" stroke="#3cb878" stroke-width="1.4"/></svg>
<svg class="a" style="left:943.10px;top:732.70px;" width="16" height="16" viewBox="0 0 16 16"><path d="M2.2 5.2 L8 10.9 L13.8 5.2" fill="none" stroke="#6e6e6e" stroke-width="2.05"/></svg>
<div class="a" style="left:979.00px;top:2.00px;width:1.00px;height:98.00px;background:#a9b3b7"></div>
<div class="a" style="left:979.00px;top:100.00px;width:1.00px;height:644.00px;background:#dadada"></div>
<div class="a" style="left:0.00px;top:0.00px;width:982.00px;height:2.00px;background:#4a7ebf"></div>
<div class="a" style="left:0.00px;top:744.00px;width:982.00px;height:2.00px;background:#4a7ebf"></div>
<div class="a" style="left:0.00px;top:0.00px;width:2.00px;height:746.00px;background:#4a7ebf"></div>
<div class="a" style="left:980.00px;top:0.00px;width:2.00px;height:746.00px;background:#4a7ebf"></div>
</body></html>
